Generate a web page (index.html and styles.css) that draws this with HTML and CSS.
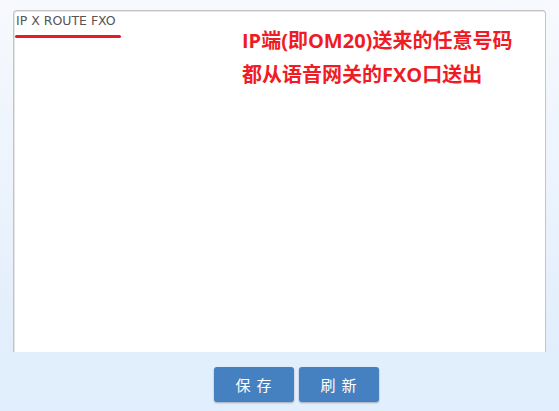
FILE: index.html
```html
<!DOCTYPE html>
<html>
    <head>
        <meta charset="UTF-8" name="viewport" content="width=device-width, initial-scale=1">
        <link rel="stylesheet" href="styles.css">
    </head>
    <body>
        <div class="page">
            <div class="panel">
                <div class="title">IP X ROUTE FXO</div>
                <!-- red annotation drawn over the screenshot -->
                <span class="underline"></span>
                <div class="note">
                    <p>IP端(即OM20)送来的任意号码</p>
                    <p>都从语音网关的FXO口送出</p>
                </div>
            </div>
            <div class="toolbar">
                <button class="btn">保存</button>
                <button class="btn">刷新</button>
            </div>
        </div>
    </body>
</html>
```

FILE: styles.css
```css
html, body {
    margin: 0;
    height: 100%;
}

body {
    font-family: "Open Sans", "Noto Sans CJK SC", sans-serif;
}

.page {
    height: 411px;
    background: linear-gradient(to bottom, #f7f9fd 0%, #e2eefc 85%, #e1eefd 100%);
    padding-top: 10px;
    box-sizing: border-box;
}

/* white config area, cut off at the bottom */
.panel {
    position: relative;
    height: 342px;
    margin: 0 13px;
    background-color: #fff;
    border: 1px solid #c4c4c4;
    border-bottom: none;
    border-radius: 4px 4px 0 0;
    box-shadow: inset 1px 1px 0 #e4e4e4;
    box-sizing: border-box;
    overflow: hidden;
}

.title {
    padding: 1px 0 0 2px;
    font-family: "DejaVu Sans", sans-serif;
    font-size: 12.5px;
    line-height: 18px;
    color: #555;
}

.underline {
    position: absolute;
    left: 1px;
    top: 24px;
    width: 106px;
    height: 3px;
    border-radius: 2px;
    background-color: #e81a2a;
}

.note {
    position: absolute;
    left: 228px;
    top: 13px;
    color: #ef1c25;
    font-size: 20px;
    font-weight: bold;
    font-family: "Open Sans", "Noto Sans CJK SC", sans-serif;
}

.note p {
    margin: 0;
    line-height: 34px;
    white-space: nowrap;
}

.toolbar {
    display: flex;
    justify-content: center;
    gap: 5px;
    padding: 15px 0 0 33px;
}

.btn {
    width: 80px;
    height: 35px;
    border: none;
    border-radius: 3px;
    background-color: #4581c1;
    color: #fff;
    font-size: 15px;
    letter-spacing: 6px;
    text-indent: 6px;
    font-family: "Noto Sans CJK SC", sans-serif;
    box-shadow: 0 1px 2px rgba(0, 0, 0, 0.3);
    cursor: pointer;
}
```
